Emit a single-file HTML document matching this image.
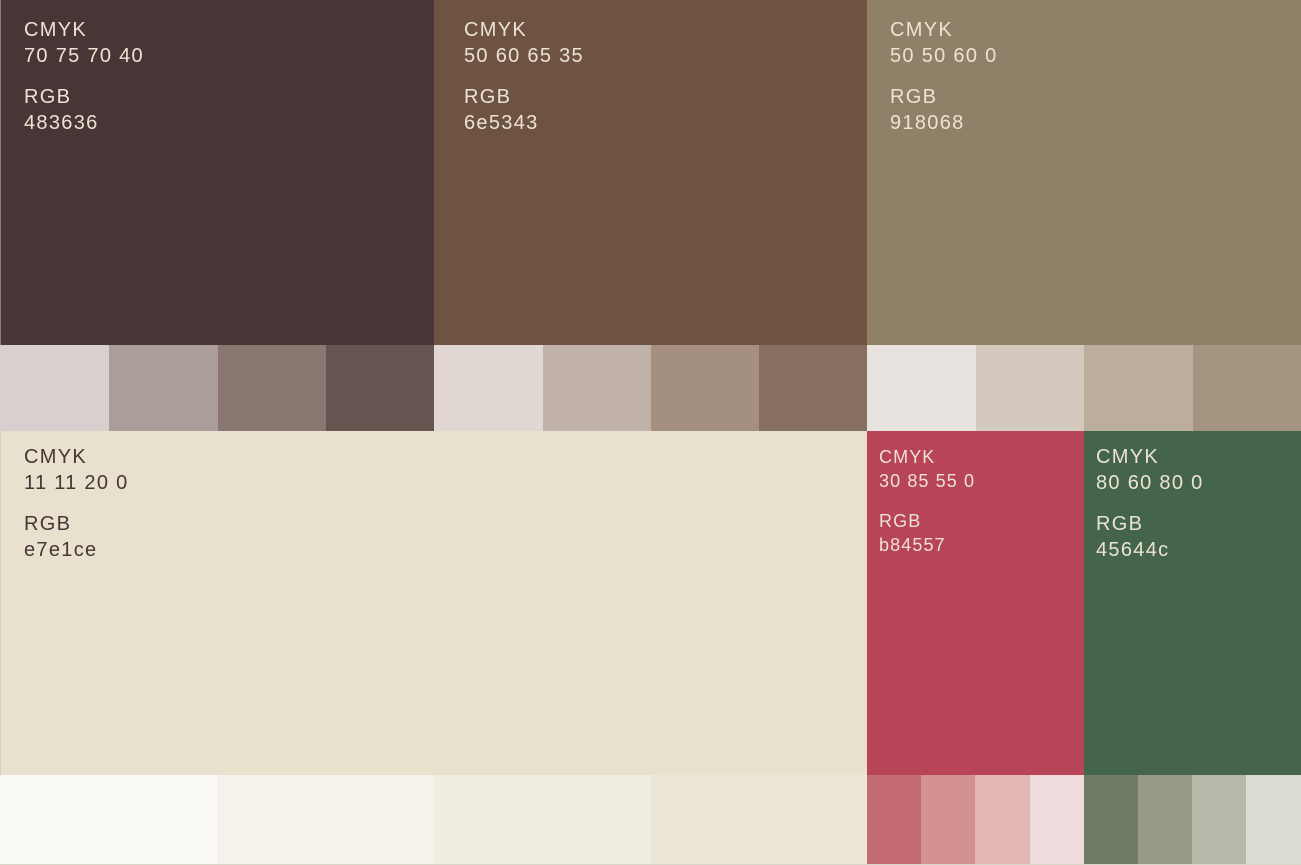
<!DOCTYPE html>
<html><head><meta charset="utf-8"><style>
body{margin:0;width:1301px;height:865px;overflow:hidden;background:#d9d4c8;position:relative;font-family:"Liberation Sans",sans-serif}
div{position:absolute;box-sizing:border-box}
.t{font-size:20px;line-height:26px;color:#ece3d2;letter-spacing:1.3px}
.t p{margin:0}
.t .g{height:15px}
.d{color:#483636}
.s{font-size:18px;line-height:24px;letter-spacing:1.1px}
</style></head><body>
<div style="left:0;top:0;width:434px;height:345px;background:#483636;border-left:1px solid #8a7f7a"></div>
<div style="left:434px;top:0;width:433px;height:345px;background:#6e5343"></div>
<div style="left:867px;top:0;width:434px;height:345px;background:#918068"></div>

<div style="left:0;top:345px;width:109px;height:86px;background:#d7d0cf"></div>
<div style="left:109px;top:345px;width:109px;height:86px;background:#ab9d9a"></div>
<div style="left:218px;top:345px;width:108px;height:86px;background:#8a7772"></div>
<div style="left:326px;top:345px;width:108px;height:86px;background:#675451"></div>
<div style="left:434px;top:345px;width:109px;height:86px;background:#e0d7d3"></div>
<div style="left:543px;top:345px;width:108px;height:86px;background:#c0b2a9"></div>
<div style="left:651px;top:345px;width:108px;height:86px;background:#a48f80"></div>
<div style="left:759px;top:345px;width:108px;height:86px;background:#887060"></div>
<div style="left:867px;top:345px;width:109px;height:86px;background:#e8e3de"></div>
<div style="left:976px;top:345px;width:108px;height:86px;background:#d4c9bf"></div>
<div style="left:1084px;top:345px;width:109px;height:86px;background:#bcae9c"></div>
<div style="left:1193px;top:345px;width:108px;height:86px;background:#a59580"></div>

<div style="left:0;top:431px;width:867px;height:344px;background:#e7e1ce;border-left:1px solid #d4cebd"></div>
<div style="left:867px;top:431px;width:217px;height:344px;background:#b84557"></div>
<div style="left:1084px;top:431px;width:217px;height:344px;background:#45644c"></div>

<div style="left:0;top:775px;width:217px;height:89px;background:#fbfaf6"></div>
<div style="left:217px;top:775px;width:217px;height:89px;background:#f5f2eb"></div>
<div style="left:434px;top:775px;width:217px;height:89px;background:#f0eee3"></div>
<div style="left:651px;top:775px;width:216px;height:89px;background:#ede5d8"></div>
<div style="left:867px;top:775px;width:54px;height:89px;background:#c36b71"></div>
<div style="left:921px;top:775px;width:54px;height:89px;background:#d39192"></div>
<div style="left:975px;top:775px;width:55px;height:89px;background:#e3b6b6"></div>
<div style="left:1030px;top:775px;width:54px;height:89px;background:#eedbdb"></div>
<div style="left:1084px;top:775px;width:54px;height:89px;background:#6f7b66"></div>
<div style="left:1138px;top:775px;width:54px;height:89px;background:#969a86"></div>
<div style="left:1192px;top:775px;width:54px;height:89px;background:#b8b9ab"></div>
<div style="left:1246px;top:775px;width:55px;height:89px;background:#dcdcd4"></div>

<div class="t" style="left:24px;top:17px"><p>CMYK</p><p>70 75 70 40</p><div class="g" style="position:static"></div><p>RGB</p><p>483636</p></div>
<div class="t" style="left:464px;top:17px"><p>CMYK</p><p>50 60 65 35</p><div class="g" style="position:static"></div><p>RGB</p><p>6e5343</p></div>
<div class="t" style="left:890px;top:17px"><p>CMYK</p><p>50 50 60 0</p><div class="g" style="position:static"></div><p>RGB</p><p>918068</p></div>
<div class="t d" style="left:24px;top:444px"><p>CMYK</p><p>11 11 20 0</p><div class="g" style="position:static"></div><p>RGB</p><p>e7e1ce</p></div>
<div class="t s" style="left:879px;top:445px"><p>CMYK</p><p>30 85 55 0</p><div class="g" style="position:static;height:16px"></div><p>RGB</p><p>b84557</p></div>
<div class="t" style="left:1096px;top:444px"><p>CMYK</p><p>80 60 80 0</p><div class="g" style="position:static"></div><p>RGB</p><p>45644c</p></div>
</body></html>
